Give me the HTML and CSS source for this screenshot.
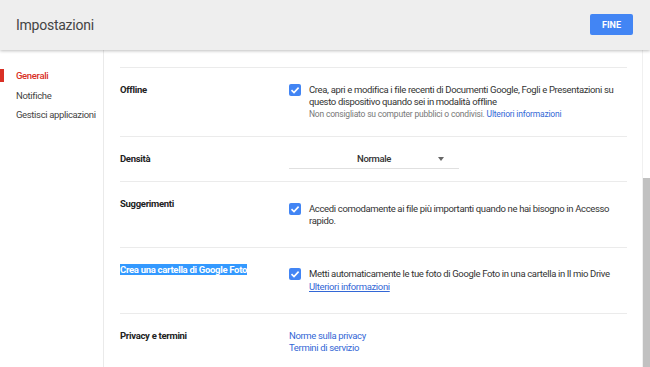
FILE: index.html
```html
<!DOCTYPE html>
<html lang="it">
<head>
    <meta charset="UTF-8">
    <meta name="viewport" content="width=device-width, initial-scale=1.0">
    <title>Impostazioni</title>
    <link rel="stylesheet" href="styles.css">
</head>
<body>
    <div class="header">
        <h1>Impostazioni</h1>
        <button class="done">FINE</button>
    </div>
    <div class="page">
        <ul class="nav">
            <li class="active">Generali</li>
            <li>Notifiche</li>
            <li>Gestisci applicazioni</li>
        </ul>
        <div class="main">
            <div class="settings">
                <div class="row">
                    <div class="label">Offline</div>
                    <div class="check">
                        <span class="box"><svg viewBox="0 0 12 12" width="12" height="12"><path d="M2.5 6.2 L5 8.6 L9.6 3.6" fill="none" stroke="#fff" stroke-width="1.6"/></svg></span>
                        <div class="text">
                            Crea, apri e modifica i file recenti di Documenti Google, Fogli e Presentazioni su questo dispositivo quando sei in modalità offline
                            <div class="note">Non consigliato su computer pubblici o condivisi. <a href="#">Ulteriori informazioni</a></div>
                        </div>
                    </div>
                </div>
                <div class="row">
                    <div class="label">Densità</div>
                    <div class="select">
                        <span>Normale</span>
                        <span class="arrow"></span>
                    </div>
                </div>
                <div class="row tall">
                    <div class="label">Suggerimenti</div>
                    <div class="check">
                        <span class="box"><svg viewBox="0 0 12 12" width="12" height="12"><path d="M2.5 6.2 L5 8.6 L9.6 3.6" fill="none" stroke="#fff" stroke-width="1.6"/></svg></span>
                        <div class="text">Accedi comodamente ai file più importanti quando ne hai bisogno in Accesso rapido.</div>
                    </div>
                </div>
                <div class="row tall">
                    <div class="label"><span class="selected">Crea una cartella di Google Foto</span></div>
                    <div class="check">
                        <span class="box"><svg viewBox="0 0 12 12" width="12" height="12"><path d="M2.5 6.2 L5 8.6 L9.6 3.6" fill="none" stroke="#fff" stroke-width="1.6"/></svg></span>
                        <div class="text">
                            Metti automaticamente le tue foto di Google Foto in una cartella in Il mio Drive
                            <a class="more" href="#">Ulteriori informazioni</a>
                        </div>
                    </div>
                </div>
                <div class="row">
                    <div class="label">Privacy e termini</div>
                    <div class="links">
                        <a href="#">Norme sulla privacy</a>
                        <a href="#">Termini di servizio</a>
                    </div>
                </div>
            </div>
            <div class="scrollbar"><div class="thumb"></div></div>
        </div>
    </div>
</body>
</html>
```

FILE: styles.css
```css
body {
    font-family: Roboto, Arial, sans-serif;
    margin: 0;
    height: 100vh;
    display: flex;
    flex-direction: column;
    background-color: #fff;
    color: #333;
    font-size: 9.5px;
    letter-spacing: -0.35px;
    overflow: hidden;
}
.header {
    height: 50px;
    flex-shrink: 0;
    background-color: #eeeeee;
    display: flex;
    align-items: center;
    justify-content: space-between;
    padding: 0 17px 0 16px;
    box-shadow: 0 1px 3px rgba(0, 0, 0, 0.25);
    position: relative;
    z-index: 1;
}
h1 {
    margin: 0;
    font-size: 14px;
    letter-spacing: -0.25px;
    font-weight: normal;
    color: #444;
}
.done {
    background-color: #4285f4;
    border: none;
    color: white;
    font-family: Roboto, Arial, sans-serif;
    font-weight: bold;
    font-size: 9px;
    letter-spacing: 0;
    width: 43px;
    height: 21px;
    border-radius: 2px;
    padding: 0;
    margin-bottom: 1px;
}
.page {
    flex: 1;
    display: flex;
    min-height: 0;
}
.nav {
    list-style: none;
    margin: 0;
    padding: 19px 0 0;
    width: 103px;
    border-right: 1px solid #eaeaea;
    flex-shrink: 0;
}
.nav li {
    padding: 0 0 0 16px;
    line-height: 13px;
    margin-bottom: 6.5px;
    color: #444;
    white-space: nowrap;
}
.nav li.active {
    color: #d93025;
    font-weight: 500;
    box-shadow: inset 4px 0 0 #d93025;
}
.main {
    flex: 1;
    display: flex;
}
.settings {
    flex: 1;
    padding: 17px 15px 0 16px;
}
.row {
    display: grid;
    grid-template-columns: 169px 1fr;
    align-items: center;
    padding: 16px 0;
    border-top: 1px solid #ebebeb;
    box-sizing: border-box;
}
.row.tall {
    min-height: 66px;
}
.label {
    align-self: start;
    font-weight: bold;
    letter-spacing: -0.3px;
    color: #222;
    line-height: 12px;
}
.selected {
    background-color: #3399ff;
    color: white;
}
.check {
    display: flex;
    align-items: flex-start;
    gap: 8px;
    line-height: 12px;
}
.box {
    width: 12px;
    height: 12px;
    flex-shrink: 0;
    background-color: #4285f4;
    border-radius: 2px;
    display: block;
}
.box svg {
    display: block;
}
.text {
    color: #333;
}
.note {
    font-size: 8.5px;
    letter-spacing: -0.2px;
    color: #777;
}
a {
    color: #3367d6;
    text-decoration: none;
}
.more {
    display: block;
    line-height: 14px;
    text-decoration: underline;
}
.select {
    width: 170px;
    display: flex;
    justify-content: center;
    position: relative;
    line-height: 12px;
    padding-bottom: 3px;
    border-bottom: 1px solid #e0e0e0;
    margin-bottom: -4px;
    font-weight: 500;
    color: #333;
}
.arrow {
    position: absolute;
    right: 15px;
    top: 4px;
    border-left: 3.5px solid transparent;
    border-right: 3.5px solid transparent;
    border-top: 4px solid #666;
}
.links {
    display: flex;
    flex-direction: column;
    line-height: 12px;
}
.scrollbar {
    width: 7px;
    flex-shrink: 0;
    border-left: 1px solid #f0f0f0;
}
.thumb {
    margin-top: 128px;
    height: 200px;
    background-color: #c1c1c1;
}
```
